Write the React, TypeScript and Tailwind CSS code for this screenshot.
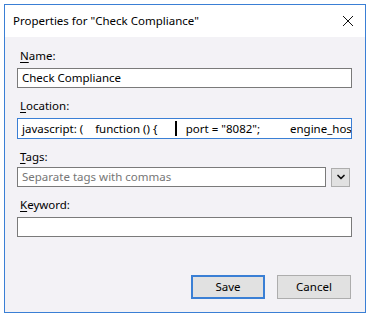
import { FiChevronDown } from "react-icons/fi";

function Label({ u, rest }: { u: string; rest: string }) {
  return (
    <p className="text-[11.5px] leading-[14px] text-black">
      <span className="underline underline-offset-2">{u}</span>
      {rest}
    </p>
  );
}

export default function App() {
  return (
    <div
      className="w-[372px] h-[319px] bg-white pt-[4px] pl-[4px]"
      style={{ fontFamily: '"Segoe UI", "Noto Sans", sans-serif' }}
    >
      <div className="w-[362px] h-[309px] border border-[#3a7fd5] bg-[#f3f2f6] flex flex-col">
        <div className="h-[32px] bg-white flex items-center justify-between pl-[8px] pr-[10px]">
          <p className="text-[11.5px] text-black">Properties for "Check Compliance"</p>
          <svg width="12" height="12" viewBox="0 0 12 12" className="mr-[1px]">
            <path d="M1 1 L11 11 M11 1 L1 11" stroke="#111" strokeWidth="1" />
          </svg>
        </div>
        <div className="flex flex-col pl-[12px] pr-[13px] pt-[12px]">
          <div className="pl-[3px]">
            <Label u="N" rest="ame:" />
          </div>
          <div className="mt-[5px] h-[20px] border border-[#7a7a7a] bg-white flex items-center pl-[4px] text-[11.5px] text-black">
            Check Compliance
          </div>
          <div className="pl-[3px] mt-[11px]">
            <Label u="L" rest="ocation:" />
          </div>
          <div className="mt-[5px] h-[21px] border border-[#3a7fd5] bg-white flex items-center pl-[4px] text-[11.5px] text-black overflow-hidden whitespace-pre">
            <span className="shrink-0">javascript: (    function () {"{"}</span>
            <span className="shrink-0 inline-block w-[1.5px] h-[15px] bg-black ml-[18px] mr-[9px]" />
            <span className="shrink-0">port = "8082";          engine_host</span>
          </div>
          <div className="pl-[3px] mt-[11px]">
            <Label u="T" rest="ags:" />
          </div>
          <div className="mt-[3px] flex items-center gap-[5px]">
            <div className="flex-1 h-[20px] border border-[#7a7a7a] bg-white flex items-center pl-[4px] text-[11.5px] text-[#767676]">
              Separate tags with commas
            </div>
            <div className="w-[19px] h-[19px] border border-[#adadad] bg-[#e1e1e1] flex items-center justify-center mr-[2px]">
              <FiChevronDown size={12} strokeWidth={3.5} color="#111" />
            </div>
          </div>
          <div className="pl-[3px] mt-[11px]">
            <Label u="K" rest="eyword:" />
          </div>
          <div className="mt-[5px] h-[20px] border border-[#7a7a7a] bg-white" />
          <div className="mt-[38px] flex justify-end gap-[12px] pr-[1px]">
            <button className="w-[74px] h-[24px] border-2 border-[#3a7fd5] bg-[#e1e1e1] text-[11.5px] text-black">
              Save
            </button>
            <button className="w-[74px] h-[24px] border border-[#adadad] bg-[#e1e1e1] text-[11.5px] text-black">
              Cancel
            </button>
          </div>
        </div>
      </div>
    </div>
  );
}
